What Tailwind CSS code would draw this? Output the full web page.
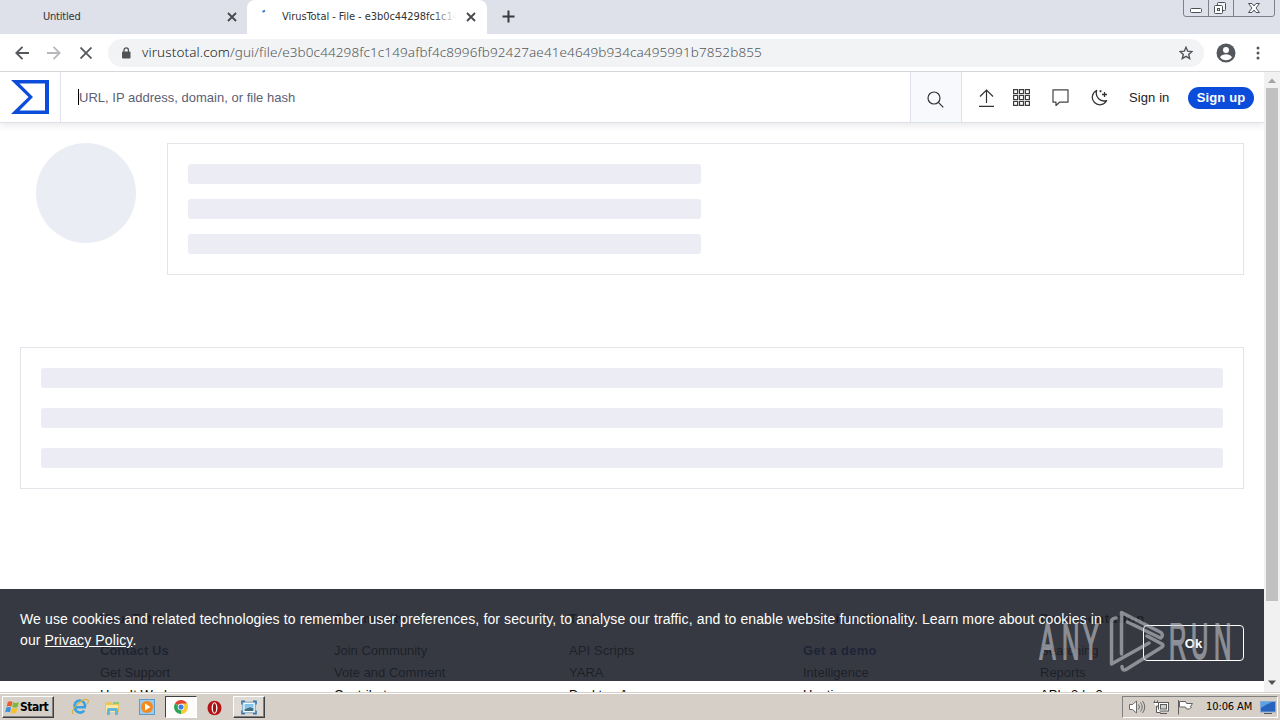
<!DOCTYPE html>
<html lang="en">
<head>
    <meta charset="UTF-8">
    <meta name="viewport" content="width=device-width, initial-scale=1.0">
    <title>VirusTotal - File</title>
    <script src="https://cdn.jsdelivr.net/npm/@tailwindcss/browser@4"></script>
</head>
<body class="relative flex h-[720px] w-[1280px] flex-col overflow-hidden bg-white font-['Liberation_Sans',Arial,sans-serif] text-[13px] text-[#222]">

    <!-- Tab strip -->
    <div class="flex h-[34px] shrink-0 bg-[#dee1e9] font-['DejaVu_Sans_Condensed','DejaVu_Sans',sans-serif] text-[11px] text-[#333]">
        <div class="flex w-[247px] items-center justify-between pl-[43px] pr-[10px]">
            <span class="mt-px tracking-[-0.2px]">Untitled</span>
            <svg class="h-[10px] w-[10px]" viewBox="0 0 10 10" fill="none" stroke="#45484c" stroke-width="1.8"><path d="M1 1l8 8M9 1L1 9"/></svg>
        </div>
        <div class="flex w-[240px] items-center rounded-t-[8px] bg-white pr-[11px]">
            <svg class="mb-[12px] ml-[14px] h-[10px] w-[10px]" viewBox="0 0 10 10" fill="none" stroke="#3f76d0" stroke-width="2"><path d="M1.500 5.800l2.500-1.200"/></svg>
            <div class="relative ml-[11px] mt-px w-[174px] overflow-hidden whitespace-nowrap">
                <span class="tracking-[-0.06px]">VirusTotal - File - e3b0c44298fc1c149afb</span>
                <div class="absolute inset-y-0 right-0 w-[24px] bg-linear-to-r from-white/0 to-white"></div>
            </div>
            <svg class="ml-auto h-[10px] w-[10px]" viewBox="0 0 10 10" fill="none" stroke="#45484c" stroke-width="1.8"><path d="M1 1l8 8M9 1L1 9"/></svg>
        </div>
        <svg class="ml-[15px] mt-[10px] h-[13px] w-[13px]" viewBox="0 0 13 13" fill="none" stroke="#36393d" stroke-width="2"><path d="M6.5 .5v12M.5 6.5h12"/></svg>
        <!-- Window buttons -->
        <svg class="ml-auto mr-[4px] h-[18px] w-[94px]" viewBox="0 0 94 18" fill="none" stroke="#7d8188">
            <path d="M1.500 0v14q0 2.500 2.500 2.500h86q2.500 0 2.500-2.500V0M26.500 0v16.500M51.500 0v16.500"/>
            <g stroke="#4c5058">
                <rect x="8.500" y="8.500" width="11" height="4" rx="1" fill="#fff"/>
                <rect x="35.500" y="2.500" width="8" height="8" rx="1" fill="#f4f4f6"/>
                <rect x="32.500" y="5.500" width="8" height="8" rx="1" fill="#fff"/>
                <rect x="35.500" y="8.500" width="2" height="2"/>
                <path fill="#fff" d="M66.500 3.500h3.500l2 2.500 2-2.500h3.500L74 8l3.500 4.500H74L72 10l-2 2.500h-3.500L70 8z"/>
            </g>
        </svg>
    </div>

    <!-- Toolbar -->
    <div class="flex h-[38px] shrink-0 items-center border-b border-[#d5d6da] bg-white">
        <svg class="ml-[15px] h-[14px] w-[14px]" viewBox="0 0 14 14" fill="none" stroke="#55585c" stroke-width="1.900"><path d="M14 7H1.500M7.500 .8L1.300 7l6.200 6.200"/></svg>
        <svg class="ml-[18px] h-[14px] w-[14px]" viewBox="0 0 14 14" fill="none" stroke="#b6b8bb" stroke-width="1.800"><path d="M0 7h12.500M6.500 .8L12.700 7l-6.200 6.200"/></svg>
        <svg class="ml-[19px] h-[12px] w-[12px]" viewBox="0 0 12 12" fill="none" stroke="#55585c" stroke-width="1.800"><path d="M.5 .5l11 11M11.500 .5l-11 11"/></svg>
        <div class="ml-[16px] flex h-[28px] w-[1096px] items-center rounded-full bg-[#f1f3f5] pl-[13px] pr-[11px]">
            <svg class="h-[12px] w-[10px]" viewBox="0 0 10 12"><rect x="1" y="4.500" width="8.500" height="7" rx="1" fill="#505356"/><path d="M3 5V3a2.200 2.200 0 014.400 0v2" fill="none" stroke="#505356" stroke-width="1.300"/></svg>
            <div class="ml-[11px] whitespace-nowrap font-['Noto_Sans',sans-serif] text-[13.5px] font-light tracking-[0.105px] text-[#55585c]"><span class="text-[#1c1d20]">virustotal.com</span>/gui/file/e3b0c44298fc1c149afbf4c8996fb92427ae41e4649b934ca495991b7852b855</div>
            <svg class="ml-auto h-[14px] w-[14px]" viewBox="0 0 14 14" fill="none" stroke="#515458" stroke-width="1.400"><path d="M7 1.300l1.700 3.900 4.200.4-3.200 2.800 1 4.200L7 10.400l-3.700 2.200 1-4.200L1.100 5.600l4.200-.4z"/></svg>
        </div>
        <svg class="ml-[12px] h-[20px] w-[20px]" viewBox="0 0 20 20"><circle cx="10" cy="10" r="9.500" fill="#54575b"/><circle cx="10" cy="7" r="3" fill="#fff"/><path d="M4 14.200c1.200-2 3.800-2.900 6-2.900s4.800.9 6 2.900a7.300 7.300 0 01-12 0z" fill="#fff"/></svg>
        <svg class="ml-[20px] h-[14px] w-[4px]" viewBox="0 0 4 14" fill="#54575b"><circle cx="2" cy="2" r="1.500"/><circle cx="2" cy="7" r="1.500"/><circle cx="2" cy="12" r="1.500"/></svg>
    </div>

    <!-- Page and scrollbar -->
    <div class="flex h-[620px] shrink-0">
        <div class="relative h-[620px] w-[1264px] overflow-hidden bg-white">

            <header class="flex h-[51px] border-b border-[#dfe1e8] bg-white shadow-[0_2px_8px_rgba(0,0,0,0.1)]">
                <div class="w-[61px] border-r border-[#e1e3ea] pl-[11px] pt-[8px]">
                    <svg class="h-[34px] w-[38px]" viewBox="0 0 38 34"><path fill="#0b4dda" fill-rule="evenodd" d="M17.500 17L0 34h38V0H0zM34 30.500H8.500L22 17 8.500 3.500H34z"/></svg>
                </div>
                <div class="flex w-[849px] items-center pl-[17px] pt-px text-[#5c6075]">
                    <div class="mb-[2px] h-[16px] w-px bg-black"></div>
                    <span class="tracking-[0.01px]">URL, IP address, domain, or file hash</span>
                </div>
                <div class="flex w-[52px] items-center justify-center border-x border-[#e1e3ea] bg-[#f7f9fd] pr-px pt-[4px]">
                    <svg class="h-[17px] w-[17px]" viewBox="0 0 17 17" fill="none" stroke="#333" stroke-width="1.200"><circle cx="7" cy="7" r="6"/><path d="M11.300 11.300l5 5"/></svg>
                </div>
                <div class="flex flex-1 items-center pl-[17px] pt-px">
                    <svg class="h-[18px] w-[15px]" viewBox="0 0 15 18" fill="none" stroke="#333" stroke-width="1.200"><path d="M7.500 14V1M1 7.500L7.500 1 14 7.500M0 17.300h15"/></svg>
                    <svg class="ml-[19px] h-[17px] w-[17px]" viewBox="0 0 17 17" fill="none" stroke="#3c3c3c" stroke-width="1.200"><path d="M.6 .6h4v4h-4zM6.500 .6h4v4h-4zM12.400 .6h4v4h-4zM.6 6.500h4v4h-4zM6.500 6.500h4v4h-4zM12.400 6.500h4v4h-4zM.6 12.400h4v4h-4zM6.500 12.400h4v4h-4zM12.400 12.400h4v4h-4z"/></svg>
                    <svg class="ml-[22px] h-[17px] w-[17px]" viewBox="0 0 17 17" fill="none" stroke="#444" stroke-width="1.200"><path d="M1 .8h15v12.400H7.500L4 16.500v-3.300H1z" stroke-linejoin="round"/></svg>
                    <svg class="ml-[22px] h-[17px] w-[17px]" viewBox="0 0 17 17" fill="none" stroke="#333" stroke-width="1.300"><path d="M5.600 1.500A7.500 7.500 0 1015.600 11.500C9.500 13.500 3.800 8 5.600 1.500z" stroke-linejoin="round"/><path d="M13.500 3v5M11 5.500h5M9.500 1.200v2M8.500 2.200h2"/></svg>
                    <span class="ml-[21px] tracking-[0.1px]">Sign in</span>
                    <span class="ml-auto mr-[10px] flex h-[22px] w-[66px] items-center justify-center rounded-full bg-[#0b4dda] font-bold tracking-[0.15px] text-white">Sign up</span>
                </div>
            </header>

            <!-- Skeleton placeholders -->
            <main class="px-[20px] pt-[20px]">
                <div class="flex pl-[16px]">
                    <div class="h-[100px] w-[100px] rounded-full bg-[#ebedf5]"></div>
                    <div class="ml-[31px] flex h-[132px] flex-1 flex-col gap-[15px] border border-[#e4e5ea] p-[20px]">
                        <div class="h-[20px] w-[513px] rounded-[3px] bg-[#ebecf4]"></div>
                        <div class="h-[20px] w-[513px] rounded-[3px] bg-[#ebecf4]"></div>
                        <div class="h-[20px] w-[513px] rounded-[3px] bg-[#ebecf4]"></div>
                    </div>
                </div>
                <div class="mt-[72px] flex h-[142px] flex-col gap-[20px] border border-[#e4e5ea] p-[20px]">
                    <div class="h-[20px] rounded-[3px] bg-[#ebecf4]"></div>
                    <div class="h-[20px] rounded-[3px] bg-[#ebecf4]"></div>
                    <div class="h-[20px] rounded-[3px] bg-[#ebecf4]"></div>
                </div>
            </main>

            <footer class="mt-[119px] grid grid-cols-[234px_235px_234px_237px_200px] whitespace-nowrap pl-[100px] leading-[22px] text-black">
                <div><h4 class="mb-[10px] font-bold">VirusTotal</h4><p class="font-bold text-[#0a2a6c]">Contact Us</p><p>Get Support</p><p>How It Works</p></div>
                <div><h4 class="mb-[10px] font-bold">Community</h4><p>Join Community</p><p>Vote and Comment</p><p>Contributors</p></div>
                <div><h4 class="mb-[10px] font-bold">Tools</h4><p class="tracking-[0.1px]">API Scripts</p><p>YARA</p><p>Desktop Apps</p></div>
                <div><h4 class="mb-[10px] font-bold">Premium Services</h4><p class="font-bold tracking-[0.3px] text-[#0a1a8c]">Get a demo</p><p>Intelligence</p><p>Hunting</p></div>
                <div><h4 class="mb-[10px] font-bold tracking-[0.8px]">Documentation</h4><p>Searching</p><p>Reports</p><p>API v3 | v2</p></div>
            </footer>

            <!-- Cookie notice -->
            <div class="absolute left-0 top-[517px] flex h-[92px] w-full items-start bg-[#20242c]/90 pl-[20px] pt-[20px] text-[14px] leading-[21px] text-white">
                <p class="w-[1100px] tracking-[0.12px]"><span class="whitespace-nowrap">We use cookies and related technologies to remember user preferences, for security, to analyse our traffic, and to enable website functionality. Learn more about cookies in</span><br>our <span class="underline">Privacy Policy</span>.</p>
                <div class="ml-[23px] mt-[16px] flex h-[36px] w-[101px] items-center justify-center rounded-[4px] border border-white text-[13px] font-bold">Ok</div>
            </div>
        </div>

        <div class="flex w-[16px] flex-col items-center bg-[#f1f1f1]">
            <svg class="h-[16px] w-[16px]" viewBox="0 0 16 16" fill="#a3a3a3"><path d="M4 11l4-4.500 4 4.500z"/></svg>
            <div class="h-[513px] w-[12px] bg-[#c1c1c1]"></div>
            <svg class="mb-px mt-auto h-[16px] w-[16px]" viewBox="0 0 16 16" fill="#505050"><path d="M4 5.500l4 4.500 4-4.500z"/></svg>
        </div>
    </div>

    <!-- Taskbar -->
    <div class="flex h-[28px] shrink-0 border-t border-[#d4d0c8] bg-[#d6cfc7] font-['DejaVu_Sans_Condensed','DejaVu_Sans',sans-serif] text-[11px] text-black">
        <div class="flex w-full items-start border-t border-white pt-[2px]">
            <div class="ml-[2px] flex h-[22px] w-[52px] items-center border border-b-[#404040] border-l-white border-r-[#404040] border-t-white pl-[2px] shadow-[inset_-1px_-1px_#808080]">
                <svg class="h-[15px] w-[15px] shrink-0" viewBox="0 0 16 15"><path d="M3 1.500q2.500-1.500 5 0L6.800 6.500q-2.500-1.300-5 0z" fill="#e7602a"/><path d="M8.800 2q2.800 1.400 6 0L13.500 7q-2.800 1.300-5.800 0z" fill="#7dba3c"/><path d="M1.500 7.500q2.600-1.300 5 0L5.200 12.600q-2.600-1.300-5 0z" fill="#3b8fdc"/><path d="M7.400 8q2.800 1.400 5.900 0L12 13q-2.800 1.300-5.900 0z" fill="#f6bf2c"/></svg>
                <span class="text-[12px] font-bold tracking-[-0.5px]">Start</span>
            </div>
            <svg class="ml-[17px] mt-[2px] h-[18px] w-[18px]" viewBox="0 0 18 18" fill="none"><path d="M4 9.200h9.800A5.200 5.200 0 103.900 9.500a5.200 5.200 0 009.300 3" stroke="#38a1e0" stroke-width="2.600"/><path d="M2 16C-1.500 12 13-1.500 17 2.200q1 1.300-.8 3.800" stroke="#d8b23a" stroke-width="1.100"/></svg>
            <svg class="ml-[15px] mt-[4px] h-[16px] w-[17px]" viewBox="0 0 17 16"><path d="M1 2h6l1.500 2H15v8H1z" fill="#e9c75d"/><path d="M2 5h12v7H2z" fill="#f9e9a2"/><path d="M3 15V9.500q0-1.500 1.500-1.500h8Q14 8 14 9.500V15h-3v-4H6v4z" fill="#65b6df"/><path d="M9 2h6v2H9z" fill="#8dcc72"/></svg>
            <svg class="ml-[18px] mt-[3px] h-[16px] w-[16px]" viewBox="0 0 16 16"><rect x=".5" y=".5" width="15" height="15" fill="#9ccbed" stroke="#5e9bcc"/><circle cx="8" cy="8" r="6" fill="#f48a1e"/><path d="M6 4.500l5.500 3.500L6 11.500z" fill="#fff"/></svg>
            <div class="ml-[10px] flex h-[22px] w-[32px] items-center justify-center border border-b-white border-l-[#404040] border-r-white border-t-[#404040] bg-[#fdfcfb]">
                <svg class="h-[14px] w-[14px]" viewBox="0 0 16 16"><path d="M8 8L1.100 4A8 8 0 0114.900 4z" fill="#e04434"/><path d="M8 8L1.100 4A8 8 0 008 16z" fill="#2fa355"/><path d="M8 8h7.500l-.6-4A8 8 0 018 16z" fill="#f6ca35"/><path d="M8 4h6.900A8 8 0 0116 8H8z" fill="#f6ca35"/><circle cx="8" cy="8" r="3.800" fill="#fff"/><circle cx="8" cy="8" r="2.900" fill="#3e7de0"/></svg>
            </div>
            <svg class="ml-[10px] mt-[4px] h-[16px] w-[15px]" viewBox="0 0 16 16"><ellipse cx="8" cy="8" rx="7.500" ry="7.800" fill="#b51519"/><ellipse cx="8" cy="8" rx="3.100" ry="6.200" fill="#fff"/><ellipse cx="8" cy="8" rx="1.700" ry="5" fill="#a51115"/></svg>
            <div class="ml-[11px] flex h-[22px] w-[32px] items-center justify-center border border-b-[#404040] border-l-white border-r-[#404040] border-t-white bg-[#dfdbd4] shadow-[inset_-1px_-1px_#808080]">
                <svg class="h-[15px] w-[16px]" viewBox="0 0 18 16"><rect x="2" y="2" width="14" height="12" fill="#f3fafd" stroke="#709ab5"/><path d="M4 4h10v4l-4-1-6 3z" fill="#7ec4ed"/><path d="M4 10l6-2.500 4 1V12H4z" fill="#3d6f86"/><path d="M1 4.500V1h3.500M13.500 1H17v3.500M17 11.500V15h-3.500M4.500 15H1v-3.500" fill="none" stroke="#3875a8" stroke-width="1.600"/></svg>
            </div>
            <!-- Tray -->
            <div class="ml-auto mr-[2px] flex h-[22px] w-[156px] items-center border border-b-white border-l-[#808080] border-r-white border-t-[#808080] pl-[6px]">
                <svg class="h-[14px] w-[17px]" viewBox="0 0 17 14" stroke="#6b6b6b" fill="#fff"><path d="M.5 4.500h3l4-3.500v12l-4-3.500h-3z"/><path d="M9.500 4.500q2 2.500 0 5M11.500 2.500q3.500 4.500 0 9M13.500 1q4.500 6 0 12" fill="none"/></svg>
                <svg class="ml-[7px] h-[15px] w-[17px]" viewBox="0 0 17 15" fill="#fff" stroke="#5b5b5b"><rect x="5.500" y="2.500" width="10" height="8.500"/><rect x="7.500" y="4.500" width="6" height="4.500" fill="#d2d0cc"/><path d="M7 13.500h7M1.500 .5v2M4.500 .5v2M.5 2.500h5v3.500h-2v6.500h4" /></svg>
                <svg class="ml-[7px] h-[16px] w-[17px]" viewBox="0 0 17 16" fill="#fff" stroke="#626262"><path d="M2.500 2.500h6l1 2h6l-2 3 1 .5-2 2h-3l-1-2h-6zM1.500 1v14.500"/></svg>
                <span class="ml-[12px] w-[48px] whitespace-nowrap tracking-[-0.1px]">10:06 AM</span>
                <svg class="ml-auto mr-px h-[13px] w-[16px]" viewBox="0 0 16 13"><rect x=".5" y=".5" width="15" height="10.500" fill="#2863bd" stroke="#88a9d5"/><path d="M1 1h11q-5 2-11 6z" fill="#5aa1e8"/><path d="M4 12.500h8" stroke="#555"/></svg>
            </div>
        </div>
    </div>

    <!-- Watermark -->
    <svg class="absolute left-[1036px] top-[604px] h-[72px] w-[200px] opacity-60" viewBox="0 0 200 72">
        <g fill="#c6c9ce" stroke="#c6c9ce" stroke-width="1.800" font-family="'Liberation Sans',sans-serif" font-size="50">
            <text transform="translate(3.500 54.500) scale(.48 1)" x="0 47 90">ANY</text>
            <text transform="translate(133 54.500) scale(.48 1)" x="0 46 94">RUN</text>
        </g>
        <g fill="none" stroke="#c6c9ce" stroke-width="3.500" stroke-linejoin="round" stroke-linecap="round">
            <path d="M80 14q-4.500 0-4.500 4v42L113 39M85.500 50V8.500L125 28.500q3 3-.5 5.500L91.500 18M111 32l15 8q2 1.500 0 3L90 65.500q-4 1.500-4-3"/>
        </g>
    </svg>
</body>
</html>
